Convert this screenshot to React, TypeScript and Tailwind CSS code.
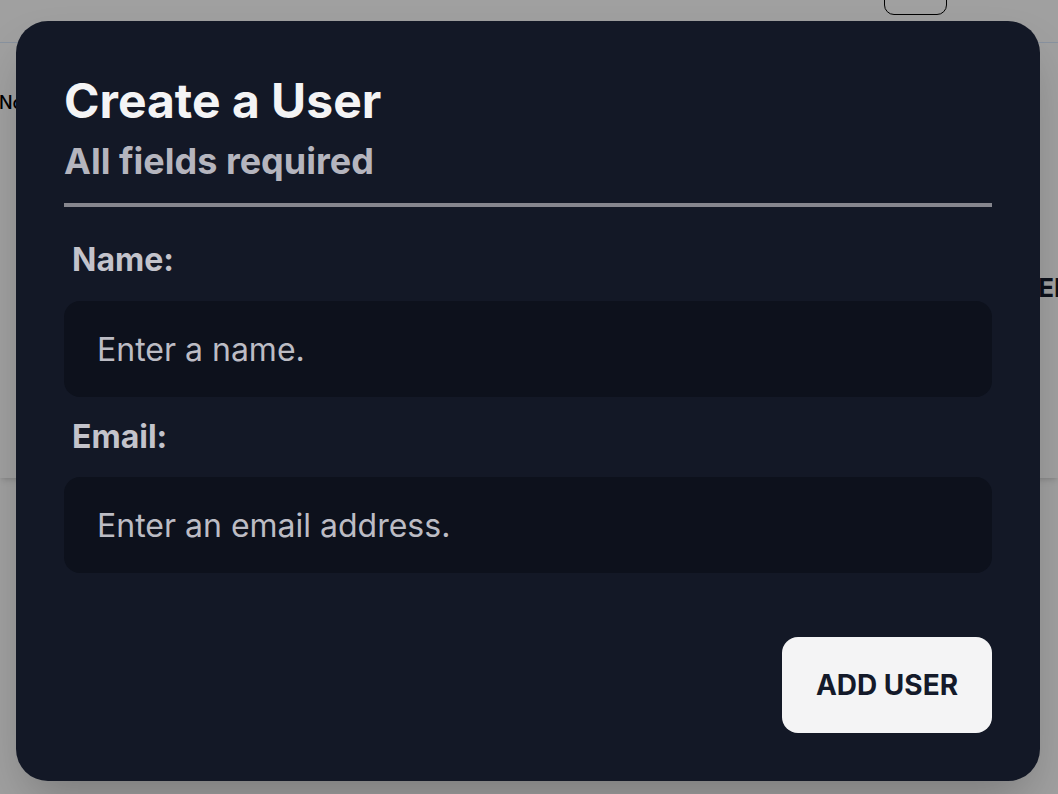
import { useState } from 'react';

export default function App() {
  const [name, setName] = useState('');
  const [email, setEmail] = useState('');

  return (
    <div className="relative h-[794px] w-[1058px] overflow-hidden bg-white font-['Inter',sans-serif]">
      {/* page behind the dialog */}
      <header className="flex h-[43px] items-end justify-between border-b border-[#dbeafe] pl-[150px] pr-[111px]">
        <div className="-mt-[22px] flex gap-[46px] self-start text-[20px] leading-[20px] font-semibold text-black">
          <span>Directory</span>
          <span>Logging</span>
        </div>
        <div className="mb-[27px] h-[40px] w-[63px] rounded-[10px] border-[1.5px] border-black" />
      </header>
      <main className="flex h-[435px] items-start justify-between bg-white shadow-md">
        <div className="mt-[46px] -ml-[1px] text-[18px] font-medium text-black">No users yet</div>
        <div className="mt-[225px] -mr-[13px] whitespace-nowrap text-[26px] font-bold text-[#141a2a]">ADD USER</div>
      </main>

      {/* overlay */}
      <div className="absolute inset-0 bg-black/[0.373]">
        <div className="ml-[16px] mt-[21px] w-[1024px] rounded-[32px] bg-[#131826] p-12 shadow-2xl">
          <h2 className="text-[48px] font-bold leading-[64px] text-[#f4f4f5]">Create a User</h2>
          <p className="text-[36px] font-bold leading-[56px] text-[#b5b5be]">All fields required</p>
          <div className="mt-[14px] h-[4px] bg-[#86868e]" />
          <form className="mt-[29px] flex flex-col" onSubmit={(e) => e.preventDefault()}>
            <label htmlFor="name" className="pl-2 text-[32px] font-bold leading-[48px] text-[#c3c3cb]">
              Name:
            </label>
            <input
              id="name"
              value={name}
              onChange={(e) => setName(e.target.value)}
              placeholder="Enter a name."
              className="mt-[17px] h-[96px] rounded-2xl bg-[#0d111c] pl-[33px] pr-8 text-[32px] text-[#e5e5ea] outline-none placeholder:text-[#bcbcc4]"
            />
            <label htmlFor="email" className="mt-4 pl-2 text-[32px] font-bold leading-[48px] text-[#c3c3cb]">
              Email:
            </label>
            <input
              id="email"
              value={email}
              onChange={(e) => setEmail(e.target.value)}
              placeholder="Enter an email address."
              className="mt-4 h-[96px] rounded-2xl bg-[#0d111c] pl-[33px] pr-8 text-[32px] text-[#e5e5ea] outline-none placeholder:text-[#bcbcc4]"
            />
            <div className="mt-16 flex justify-end">
              <button
                type="submit"
                className="h-[96px] w-[210px] rounded-2xl bg-[#f4f4f5] text-[28px] font-bold text-[#141a2a]"
              >
                ADD USER
              </button>
            </div>
          </form>
        </div>
      </div>
    </div>
  );
}
